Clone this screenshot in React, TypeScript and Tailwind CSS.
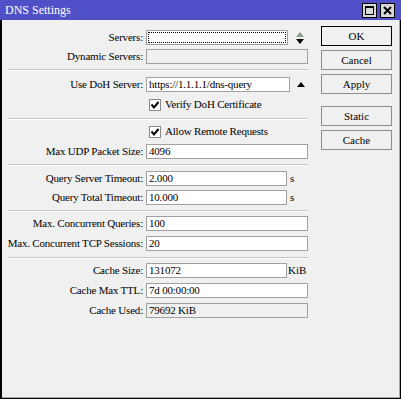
import React from "react";

function Label({ children }: { children: React.ReactNode }) {
  return (
    <div className="w-[142px] shrink-0 text-right pr-[1px] leading-[15px] whitespace-nowrap tracking-[-0.2px]">
      {children}
    </div>
  );
}

function Input({
  value = "",
  w,
  disabled = false,
  focused = false,
}: {
  value?: string;
  w: string;
  disabled?: boolean;
  focused?: boolean;
}) {
  return (
    <div
      className={`${w} h-[15px] ml-[2px] border border-[#a0a0a0] ${
        disabled ? "bg-[#f0f0f0]" : "bg-white"
      } relative overflow-hidden`}
    >
      {focused && (
        <div className="absolute inset-[1px] border border-dotted border-black" />
      )}
      <div className="pl-[2px] leading-[13px] whitespace-nowrap tracking-[-0.2px]">
        {value}
      </div>
    </div>
  );
}

function Row({ children }: { children: React.ReactNode }) {
  return <div className="flex items-center h-[15px]">{children}</div>;
}

function Check({ label }: { label: string }) {
  return (
    <div className="flex items-center h-[15px] pl-[147px]">
      <div className="w-[12px] h-[12px] border border-[#8a8a8a] bg-white flex items-center justify-center">
        <svg width="10" height="10" viewBox="0 0 10 10">
          <path d="M1.5 4.5 L4 7.5 L8.5 2" fill="none" stroke="#000" strokeWidth="2" />
        </svg>
      </div>
      <div className="ml-[4px] leading-[15px] tracking-[-0.2px]">{label}</div>
    </div>
  );
}

function Sep() {
  return (
    <div className="ml-[6px] w-[300px]">
      <div className="h-[1px] bg-[#c4c4c4]" />
      <div className="h-[1px] bg-white" />
    </div>
  );
}

function Btn({ label, def = false }: { label: string; def?: boolean }) {
  return (
    <div
      className={`w-[71px] h-[20px] flex items-center justify-center bg-[#f0f0f0] ${
        def ? "border border-black" : "border border-[#8c8c8c]"
      }`}
    >
      <span className="leading-[15px]">{label}</span>
    </div>
  );
}

export default function App() {
  return (
    <div className="w-[401px] h-[399px] bg-[#f0f0f0] text-[11px] text-black flex flex-col font-['Liberation_Serif','Times_New_Roman',serif]">
      {/* title bar */}
      <div className="h-[20px] bg-[#5050c8] flex items-center shrink-0">
        <div className="ml-[5px] text-white text-[12px] leading-[20px] flex-1">DNS Settings</div>
        <div className="flex gap-[3px] mr-[6px]">
          <div className="w-[15px] h-[15px] bg-[#d8d8d8] border border-black flex items-center justify-center">
            <div className="w-[9px] h-[9px] border border-black border-t-2" />
          </div>
          <div className="w-[15px] h-[15px] bg-[#d8d8d8] border border-black flex items-center justify-center">
            <svg width="9" height="9" viewBox="0 0 9 9">
              <path d="M1 1 L8 8 M8 1 L1 8" stroke="#000" strokeWidth="2" />
            </svg>
          </div>
        </div>
      </div>
      {/* body */}
      <div className="flex-1 border-l-2 border-b border-r border-black">
        <div className="h-full border-r border-b border-[#a8a8a8] flex">
          {/* form */}
          <div className="w-[317px] flex flex-col">
            <div className="pt-[10px] pb-[5px] flex flex-col gap-[4px]">
              <Row>
                <Label>Servers:</Label>
                <Input w="w-[142px]" focused />
                <svg width="10" height="14" viewBox="0 0 10 14" className="ml-[7px]">
                  <path d="M1 6 L5 1 L9 6 Z" fill="#8c9a8c" />
                  <path d="M1 8 L5 13 L9 8 Z" fill="#000" />
                </svg>
              </Row>
              <Row>
                <Label>Dynamic Servers:</Label>
                <Input w="w-[162px]" disabled />
              </Row>
            </div>
            <Sep />
            <div className="pt-[6px] pb-[6px] flex flex-col gap-[5px]">
              <Row>
                <Label>Use DoH Server:</Label>
                <Input w="w-[144px]" value="https://1.1.1.1/dns-query" />
                <svg width="10" height="8" viewBox="0 0 10 8" className="ml-[6px]">
                  <path d="M1 6 L5 1 L9 6 Z" fill="#000" />
                </svg>
              </Row>
              <Check label="Verify DoH Certificate" />
            </div>
            <Sep />
            <div className="pt-[4px] pb-[5px] flex flex-col gap-[5px]">
              <Check label="Allow Remote Requests" />
              <Row>
                <Label>Max UDP Packet Size:</Label>
                <Input w="w-[162px]" value="4096" />
              </Row>
            </div>
            <Sep />
            <div className="pt-[5px] pb-[5px] flex flex-col gap-[4px]">
              <Row>
                <Label>Query Server Timeout:</Label>
                <Input w="w-[141px]" value="2.000" />
                <span className="ml-[3px] leading-[15px]">s</span>
              </Row>
              <Row>
                <Label>Query Total Timeout:</Label>
                <Input w="w-[141px]" value="10.000" />
                <span className="ml-[3px] leading-[15px]">s</span>
              </Row>
            </div>
            <Sep />
            <div className="pt-[4px] pb-[6px] flex flex-col gap-[5px]">
              <Row>
                <Label>Max. Concurrent Queries:</Label>
                <Input w="w-[162px]" value="100" />
              </Row>
              <Row>
                <Label>Max. Concurrent TCP Sessions:</Label>
                <Input w="w-[162px]" value="20" />
              </Row>
            </div>
            <Sep />
            <div className="pt-[4px] flex flex-col gap-[5px]">
              <Row>
                <Label>Cache Size:</Label>
                <Input w="w-[141px]" value="131072" />
                <span className="ml-[1px] leading-[15px]">KiB</span>
              </Row>
              <Row>
                <Label>Cache Max TTL:</Label>
                <Input w="w-[162px]" value="7d 00:00:00" />
              </Row>
              <Row>
                <Label>Cache Used:</Label>
                <Input w="w-[162px]" value="79692 KiB" disabled />
              </Row>
            </div>
          </div>
          {/* buttons */}
          <div className="ml-[2px] pt-[6px] flex flex-col gap-[4px]">
            <Btn label="OK" def />
            <Btn label="Cancel" />
            <Btn label="Apply" />
            <div className="h-[4px]" />
            <Btn label="Static" />
            <Btn label="Cache" />
          </div>
        </div>
      </div>
    </div>
  );
}
